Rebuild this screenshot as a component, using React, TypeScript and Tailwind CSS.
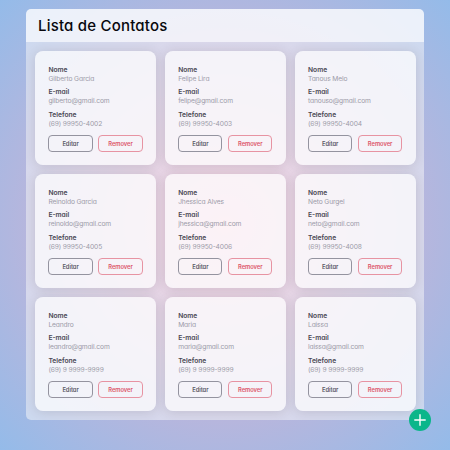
type Contact = { name: string; email: string; phone: string };

const contacts: Contact[] = [
  { name: "Gilberto Garcia", email: "gilberto@gmail.com", phone: "(69) 99950-4002" },
  { name: "Felipe Lira", email: "felipe@gmail.com", phone: "(69) 99950-4003" },
  { name: "Tanous Melo", email: "tanouso@gmail.com", phone: "(69) 99950-4004" },
  { name: "Reinoldo Garcia", email: "reinoldo@gmail.com", phone: "(69) 99950-4005" },
  { name: "Jhessica Alves", email: "jhessica@gmail.com", phone: "(69) 99950-4006" },
  { name: "Neto Gurgel", email: "neto@gmail.com", phone: "(69) 99950-4008" },
  { name: "Leandro", email: "leandro@gmail.com", phone: "(69) 9 9999-9999" },
  { name: "Maria", email: "maria@gmail.com", phone: "(69) 9 9999-9999" },
  { name: "Laissa", email: "laissa@gmail.com", phone: "(69) 9 9999-9999" },
];

function Field({ label, value }: { label: string; value: string }) {
  return (
    <div className="text-[6.7px] leading-[8.9px] whitespace-nowrap">
      <dt className="font-semibold text-[#4a4854]">{label}</dt>
      <dd className="tracking-[-0.13px] text-[#9c9ba8]">{value}</dd>
    </div>
  );
}

function Card({ contact }: { contact: Contact }) {
  return (
    <article className="flex flex-col rounded-[8px] bg-white/70 px-[13.4px] pt-[15px] shadow-[0_1px_12px_rgba(60,50,60,0.16)]">
      <dl className="flex flex-col gap-[4.5px]">
        <Field label="Nome" value={contact.name} />
        <Field label="E-mail" value={contact.email} />
        <Field label="Telefone" value={contact.phone} />
      </dl>
      <div className="mt-[6.5px] flex gap-[5.7px] text-[5.8px] font-semibold tracking-[-0.05px]">
        <button className="flex h-[17px] flex-1 items-center justify-center rounded-[4px] border border-[#94939f] pt-px text-[#5b5a66]">
          Editar
        </button>
        <button className="flex h-[17px] flex-1 items-center justify-center rounded-[4px] border border-[#e793a2] pt-px text-[#dc5468]">
          Remover
        </button>
      </div>
    </article>
  );
}

export default function App() {
  return (
    <div className="h-[450px] w-[450px] overflow-hidden bg-[radial-gradient(circle,#eeaeca_0%,#94bbe9_100%)] pt-[9px] pl-[26px] font-['Inter','Lato',sans-serif] [font-feature-settings:'cv11']">
      <main className="relative h-[411px] w-[398px]">
        <div className="flex h-full flex-col overflow-hidden rounded-[5px]">
          <header className="flex h-[33px] items-center bg-white/80 pt-[2px] pl-[12px]">
            <h1 className="text-[15px] font-medium tracking-[0.2px] text-[#08080d]">Lista de Contatos</h1>
          </header>
          <section className="grid flex-1 grid-cols-[repeat(3,121px)] grid-rows-[repeat(3,114px)] gap-x-[8.8px] gap-y-[9px] overflow-hidden bg-[#fafafa]/50 pt-[9px] pl-[9px]">
            {contacts.map((c) => (
              <Card key={c.email} contact={c} />
            ))}
          </section>
        </div>
        <button
          aria-label="Adicionar"
          className="absolute top-[400px] left-[383px] flex size-[21.5px] items-center justify-center rounded-full bg-[#0bb68a]"
        >
          <svg viewBox="0 0 12 12" className="size-[12px]" stroke="white" strokeWidth="1.4" fill="none">
            <path d="M6 .3v11.4M.3 6h11.4" />
          </svg>
        </button>
      </main>
    </div>
  );
}
